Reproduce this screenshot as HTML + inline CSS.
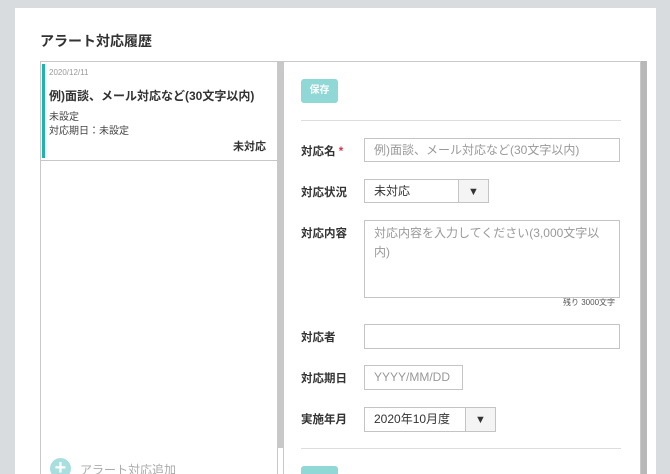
<!DOCTYPE html>
<html><head><meta charset="utf-8"><style>
*{margin:0;padding:0;box-sizing:border-box}
html,body{width:670px;height:474px;overflow:hidden}
body{background:#d9dcde;font-family:"Liberation Sans","Noto Sans CJK JP",sans-serif;color:#333;position:relative}
.card{position:absolute;left:15px;top:8px;width:641px;height:480px;background:#fff}
.abs{position:absolute}
.title{left:40px;top:31px;font-size:14px;font-weight:bold;color:#333}
.lp{left:40px;top:61px;width:238px;height:420px;border:1px solid #c8c8c8;border-bottom:none}
.item{left:40px;top:61px;width:238px;height:100px;border:1px solid #c8c8c8}
.bar{left:42px;top:64px;width:3px;height:94px;background:#1bb5ad}
.lsb{left:277px;top:61px;width:7px;height:387px;background:#c8c8c8}
.rp{left:283px;top:61px;width:358px;height:420px;border:1px solid #c8c8c8;border-bottom:none}
.rsb{left:641px;top:61px;width:6px;height:420px;background:#b8b8b8}
.btn{background:#8fd8d6;color:#fff;font-size:10px;font-weight:bold;border-radius:3px;text-align:center;line-height:24px}
.lab{left:301px;font-size:11.5px;font-weight:bold;color:#333}
.inp{border:1px solid #c4c4c4;background:#fff;font-size:12px;color:#999;padding-left:9px;line-height:22px}
.hr{left:301px;width:320px;height:1px;background:#ddd}
.arr{position:absolute;top:0;bottom:0;right:0;width:30px;border-left:1px solid #c4c4c4;background:#f4f4f4;font-size:11px;color:#333;text-align:center;line-height:24px}
</style></head><body>
<div class="card"></div>
<div class="abs title">アラート対応履歴</div>
<div class="abs lp"></div>
<div class="abs item"></div>
<div class="abs bar"></div>
<div class="abs" style="left:49px;top:68px;font-size:8px;color:#999">2020/12/11</div>
<div class="abs" style="left:49px;top:87px;font-size:12px;font-weight:bold;color:#333">例)面談、メール対応など(30文字以内)</div>
<div class="abs" style="left:49px;top:108px;font-size:10px;color:#444">未設定</div>
<div class="abs" style="left:49px;top:122px;font-size:10px;color:#444">対応期日：未設定</div>
<div class="abs" style="left:233px;top:138px;font-size:11px;font-weight:bold;color:#333">未対応</div>
<div class="abs lsb"></div>
<div class="abs" style="left:50px;top:458px;width:21px;height:21px;border-radius:50%;background:#a9dede;color:#fff;font-size:20px;font-weight:bold;text-align:center;line-height:20px">+</div>
<div class="abs" style="left:80px;top:461px;font-size:12px;color:#aaa">アラート対応追加</div>
<div class="abs rp"></div>
<div class="abs rsb"></div>
<div class="abs btn" style="left:301px;top:79px;width:37px;height:24px">保存</div>
<div class="abs hr" style="top:120px"></div>
<div class="abs lab" style="top:143px">対応名 <span style="color:#d9334c">*</span></div>
<div class="abs inp" style="left:364px;top:138px;width:256px;height:24px">例)面談、メール対応など(30文字以内)</div>
<div class="abs lab" style="top:184px">対応状況</div>
<div class="abs inp" style="left:364px;top:179px;width:125px;height:24px;color:#333">未対応<div class="arr">▼</div></div>
<div class="abs lab" style="top:225px">対応内容</div>
<div class="abs inp" style="left:364px;top:220px;width:256px;height:78px;line-height:19px;padding-top:3px;padding-right:14px">対応内容を入力してください(3,000文字以内)</div>
<div class="abs" style="left:563px;top:297px;font-size:8px;color:#555">残り 3000文字</div>
<div class="abs lab" style="top:329px">対応者</div>
<div class="abs inp" style="left:364px;top:324px;width:256px;height:25px"></div>
<div class="abs lab" style="top:370px">対応期日</div>
<div class="abs inp" style="left:364px;top:365px;width:99px;height:25px">YYYY/MM/DD</div>
<div class="abs lab" style="top:411px">実施年月</div>
<div class="abs inp" style="left:364px;top:407px;width:132px;height:25px;color:#333">2020年10月度<div class="arr">▼</div></div>
<div class="abs hr" style="top:448px"></div>
<div class="abs btn" style="left:301px;top:466px;width:37px;height:24px"></div>
</body></html>
